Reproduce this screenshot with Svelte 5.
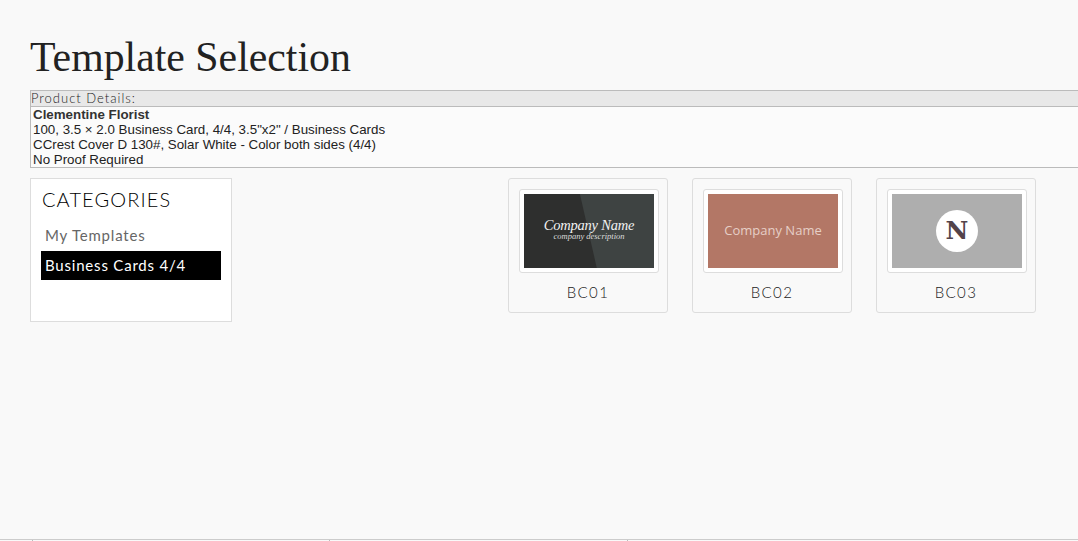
<script>
	const templates = [
		{ id: 'BC01', style: 'dark' },
		{ id: 'BC02', style: 'rose' },
		{ id: 'BC03', style: 'grey' }
	];
</script>

<div class="page">
	<h1>Template Selection</h1>

	<div class="details">
		<div class="details-head">Product Details:</div>
		<div class="details-body">
			<strong>Clementine Florist</strong>
			<div>100, 3.5 × 2.0 Business Card, 4/4, 3.5"x2" / Business Cards</div>
			<div>CCrest Cover D 130#, Solar White - Color both sides (4/4)</div>
			<div>No Proof Required</div>
		</div>
	</div>

	<div class="main">
		<aside class="sidebar">
			<h2>CATEGORIES</h2>
			<div class="cat">My Templates</div>
			<div class="cat active">Business Cards 4/4</div>
		</aside>

		<div class="cards">
			{#each templates as t}
				<div class="card">
					<div class="frame">
						<div class="thumb {t.style}">
							{#if t.style === 'dark'}
								<div class="shade"></div>
								<div class="script">Company Name</div>
								<div class="desc">company description</div>
							{:else if t.style === 'rose'}
								<div class="plain">Company Name</div>
							{:else}
								<div class="circle">N</div>
							{/if}
						</div>
					</div>
					<div class="label">{t.id}</div>
				</div>
			{/each}
		</div>
	</div>
</div>

<div class="footer">
	<span class="tick"></span>
	<span class="tick"></span>
	<span class="tick"></span>
</div>

<style>
	:global(body) {
		background: #f9f9f9;
		font-family: "Liberation Sans", Arial, sans-serif;
		overflow: hidden;
	}
	.page {
		height: 539px;
		box-sizing: border-box;
		padding: 36px 0 0 30px;
		overflow: hidden;
	}
	h1 {
		margin: 0 0 11px;
		font-family: "Liberation Serif", serif;
		font-weight: 400;
		font-size: 41.8px;
		line-height: 43px;
		color: #222;
	}
	.details {
		width: 1100px;
		border: 1px solid #bbb;
		background: #fbfbfb;
		box-sizing: border-box;
		height: 78px;
	}
	.details-head {
		background: #e8e8e8;
		border-bottom: 1px solid #bbb;
		height: 15px;
		line-height: 15px;
		font-family: Lato, sans-serif;
		font-weight: 300;
		font-size: 13px;
		letter-spacing: 1px;
		color: #222;
	}
	.details-body {
		padding-left: 2px;
		font-size: 13.33px;
		line-height: 15px;
		color: #222;
	}
	.details-body strong {
		color: #333;
	}
	.main {
		display: flex;
		margin-top: 10px;
		align-items: flex-start;
	}
	.sidebar {
		width: 202px;
		height: 144px;
		box-sizing: border-box;
		background: #fff;
		border: 1px solid #ddd;
		padding: 10px;
		font-family: Lato, sans-serif;
	}
	h2 {
		margin: -2px 0 10px 1px;
		font-weight: 300;
		font-size: 20px;
		line-height: 24px;
		letter-spacing: 1.1px;
		color: #000;
	}
	.cat {
		height: 29px;
		line-height: 29px;
		padding-left: 4px;
		font-size: 15px;
		letter-spacing: 0.8px;
		color: #666;
		margin-bottom: 1px;
	}
	.cat.active {
		background: #000;
		color: #fff;
	}
	.cards {
		display: flex;
		gap: 24px;
		margin-left: 276px;
	}
	.card {
		width: 160px;
		height: 135px;
		box-sizing: border-box;
		border: 1px solid #ddd;
		border-radius: 3px;
		padding: 10px;
	}
	.frame {
		width: 140px;
		height: 84px;
		box-sizing: border-box;
		background: #fff;
		border: 1px solid #ddd;
		border-radius: 3px;
		padding: 4px;
	}
	.thumb {
		position: relative;
		height: 74px;
		overflow: hidden;
		display: flex;
		flex-direction: column;
		align-items: center;
		justify-content: center;
	}
	.dark {
		background: #2e2f2e;
		color: #f2f2f2;
	}
	.shade {
		position: absolute;
		inset: 0;
		background: #3e4342;
		clip-path: polygon(43% 0, 100% 0, 100% 100%, 56% 100%);
	}
	.script {
		position: relative;
		font-family: "Liberation Serif", serif;
		font-style: italic;
		font-size: 14.5px;
		line-height: 13px;
		letter-spacing: -0.2px;
		margin-top: -3px;
	}
	.desc {
		position: relative;
		font-family: "Liberation Serif", serif;
		font-style: italic;
		font-size: 8.5px;
		line-height: 9px;
		color: #ddd;
	}
	.rose {
		background: #b37766;
	}
	.plain {
		font-family: "Open Sans", sans-serif;
		font-size: 13px;
		color: #e6cfc6;
		margin-top: -2px;
	}
	.grey {
		background: #aeaeae;
	}
	.circle {
		width: 42px;
		height: 42px;
		border-radius: 50%;
		background: #fff;
		color: #53434a;
		font-family: "DejaVu Serif", serif;
		font-weight: 700;
		font-size: 25px;
		line-height: 42px;
		text-align: center;
	}
	.label {
		margin-top: 10px;
		text-align: center;
		font-family: Lato, sans-serif;
		font-weight: 300;
		font-size: 15px;
		line-height: 18px;
		letter-spacing: 1.4px;
		color: #222;
	}
	.footer {
		height: 2px;
		border-top: 1px solid #ccc;
		position: relative;
	}
	.tick {
		position: absolute;
		top: 0;
		width: 1px;
		height: 2px;
		background: #bbb;
	}
	.tick:nth-child(1) { left: 32px; }
	.tick:nth-child(2) { left: 329px; }
	.tick:nth-child(3) { left: 627px; }
</style>
